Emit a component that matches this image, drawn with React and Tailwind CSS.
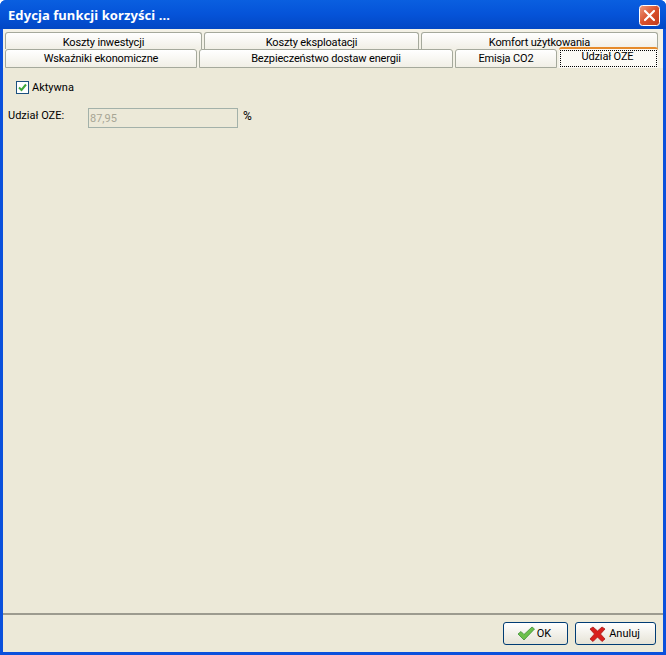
const font = { fontFamily: 'Roboto, "Liberation Sans", sans-serif' };
const titleFont = { fontFamily: '"Noto Sans", sans-serif' };

function Tab({ label, className = '' }) {
  return (
    <div className={`flex h-[17px] items-center justify-center rounded-t-[3px] border border-[#a5a99c] bg-gradient-to-b from-white to-[#f1efe6] text-[11px] leading-none tracking-[-0.15px] text-black ${className}`}>
      {label}
    </div>
  );
}

function CloseIcon() {
  return (
    <svg width="21" height="21" viewBox="0 0 21 21">
      <defs>
        <linearGradient id="closeBg" x1="0" y1="0" x2="1" y2="1">
          <stop offset="0" stopColor="#ee9c80" />
          <stop offset="0.5" stopColor="#d9512c" />
          <stop offset="1" stopColor="#c13a1c" />
        </linearGradient>
      </defs>
      <rect x="0.5" y="0.5" width="20" height="20" rx="3" fill="url(#closeBg)" stroke="#fff" />
      <path d="M6 6l9 9M15 6l-9 9" stroke="#fff" strokeWidth="2.2" strokeLinecap="round" />
    </svg>
  );
}

function OkIcon() {
  return (
    <svg width="18" height="15" viewBox="0 0 18 15">
      <path d="M1 8l3-2.500 3 3L15 1l2.500 2L7 14z" fill="#6cc04a" stroke="#3f8f3a" strokeWidth="0.8" strokeLinejoin="round" />
    </svg>
  );
}

function CancelIcon() {
  return (
    <svg width="17" height="16" viewBox="0 0 17 16">
      <path d="M1 3l3-2 4.500 4L13 1l3 2-4.500 5 4.500 5-3 2.500-4.500-4.500L4 15.500 1 13l4.500-5z" fill="#d8201c" stroke="#a81a16" strokeWidth="0.8" strokeLinejoin="round" />
    </svg>
  );
}

export default function App() {
  return (
    <div style={font} className="flex h-[655px] w-[666px] flex-col overflow-hidden rounded-t-[6px] bg-[#0a50dc] text-black">
      {/* Title bar */}
      <div className="flex h-[29px] shrink-0 items-center justify-between bg-gradient-to-b from-[#0a5fe0] via-[#0553d8] to-[#0247c4] pl-[8px] pr-[6px] pt-[2px]">
        <span style={titleFont} className="text-[13px] font-bold tracking-[0.08px] text-white">Edycja funkcji korzyści ...</span>
        <CloseIcon />
      </div>

      <div className="mx-[3px] mb-[3px] flex min-h-0 flex-1 flex-col bg-[#ece9d8]">
        {/* Tabs */}
        <div className="flex flex-col bg-[#f3f1e6] pt-[3px]">
          <div className="flex gap-[2px] pl-[2px] pr-[5px]">
            <Tab label="Koszty inwestycji" className="w-[197px] border-b-0 pt-[2px]" />
            <Tab label="Koszty eksploatacji" className="w-[215px] border-b-0 pt-[2px]" />
            <Tab label="Komfort użytkowania" className="w-[237px] border-b-0 pt-[2px]" />
          </div>
          <div className="flex gap-[2px] pl-[2px] pr-[5px]">
            <Tab label="Wskaźniki ekonomiczne" className="h-[19px] w-[192px]" />
            <Tab label="Bezpieczeństwo dostaw energii" className="h-[19px] w-[254px]" />
            <Tab label="Emisja CO2" className="h-[19px] w-[102px]" />
            <div className="relative z-10 -mt-[2px] h-[21px] w-[99px] rounded-t-[3px] border-t-2 border-[#e68b2c] bg-[#fbfaf5] p-[1px] text-[11px] tracking-[-0.15px]">
              <div className="flex h-full items-center justify-center border border-dotted border-black pb-[5px] pr-[2px] leading-none">Udział OZE</div>
            </div>
          </div>
        </div>

        {/* Pane */}
        <div className="flex min-h-0 flex-1 flex-col">
          <label className="ml-[13px] mt-[13px] flex items-center gap-[3px] text-[11px] leading-none">
            <span className="flex h-[13px] w-[13px] items-center justify-center border border-[#1c5180] bg-white">
              <svg width="9" height="9" viewBox="0 0 9 9">
                <path d="M1 4.500l2.500 2.500L8 1.500" fill="none" stroke="#3fa83a" strokeWidth="2" />
              </svg>
            </span>
            Aktywna
          </label>
          <div className="ml-[5px] mt-[14px] flex items-start text-[11px] leading-none">
            <span className="mt-[2px] w-[80px]">Udział OZE:</span>
            <div className="flex h-[20px] w-[150px] items-center border border-[#a3b1a9] bg-[#ece9d8] pl-[1px] text-[#a7a695]">87,95</div>
            <span className="ml-[5px] mt-[2px] text-[12px]">%</span>
          </div>
        </div>

        {/* Footer */}
        <div className="flex h-[39px] shrink-0 items-start justify-end gap-[7px] border-t-2 border-[#9c9b8f] pr-[7px] pt-[7px]">
          <button className="flex h-[23px] w-[65px] items-center justify-center gap-[2px] rounded-[3px] border border-[#003c74] bg-gradient-to-b from-white to-[#e6e3d6] pr-[3px] text-[11px] leading-none">
            <OkIcon /> OK
          </button>
          <button className="flex h-[23px] w-[81px] items-center justify-center gap-[3px] rounded-[3px] border border-[#003c74] bg-gradient-to-b from-white to-[#e6e3d6] pr-[2px] text-[11px] leading-none">
            <CancelIcon /> Anuluj
          </button>
        </div>
      </div>
    </div>
  );
}
